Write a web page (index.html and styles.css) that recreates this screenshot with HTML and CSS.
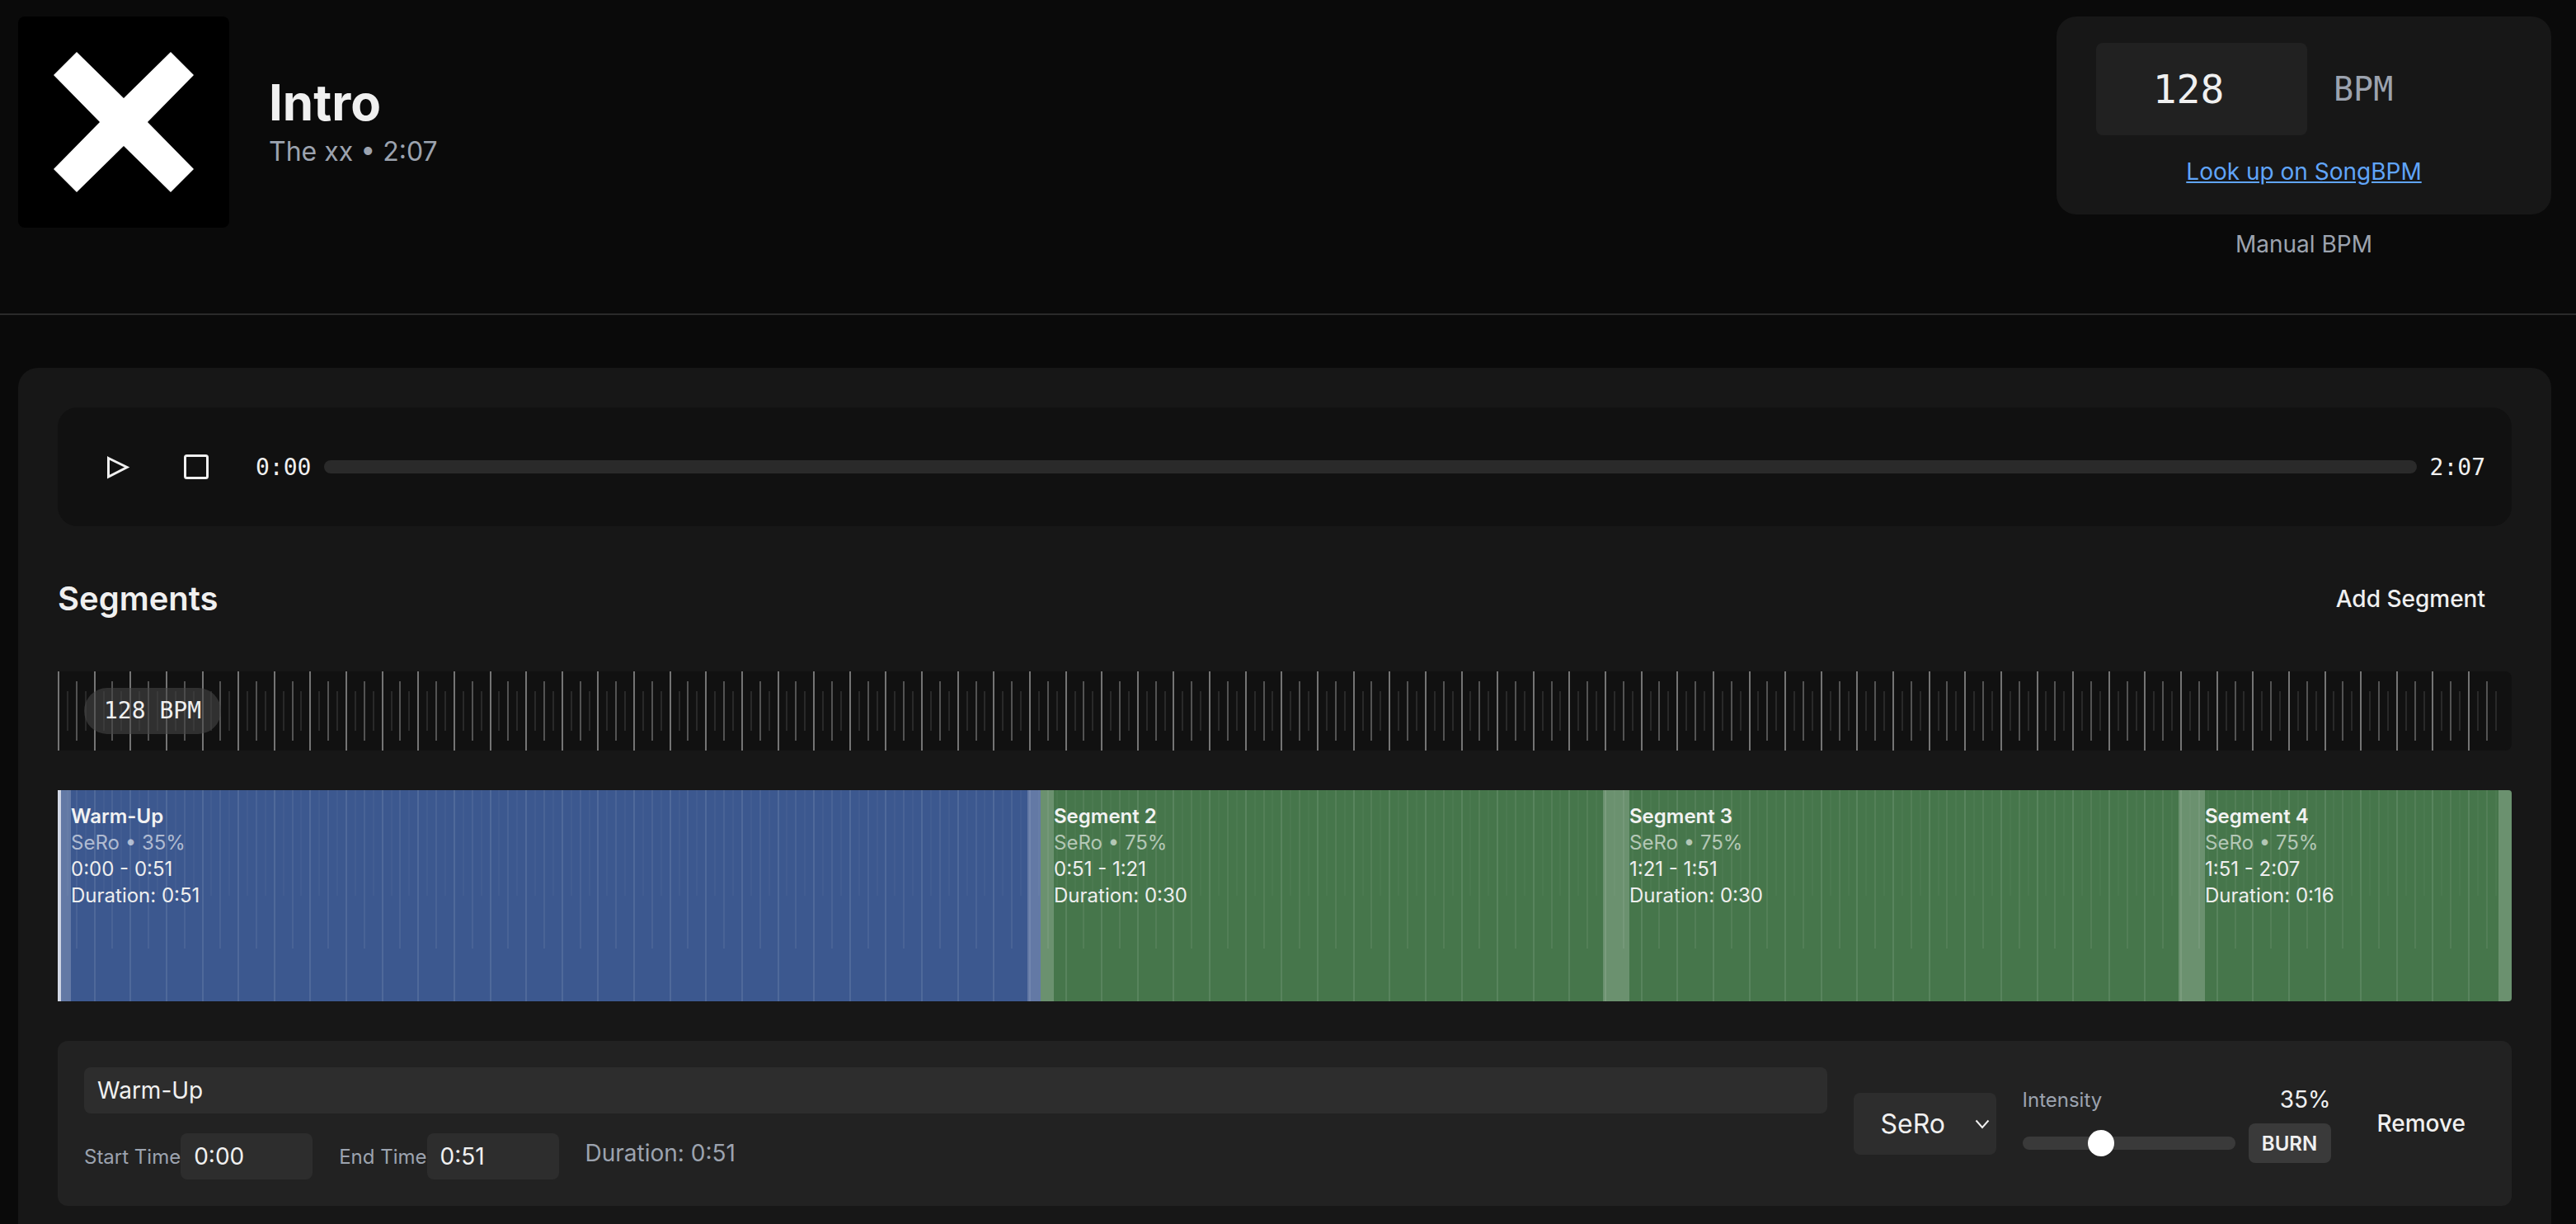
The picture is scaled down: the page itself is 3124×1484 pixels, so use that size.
FILE: index.html
```html
<!DOCTYPE html>
<html lang="en">
<head>
    <meta charset="UTF-8">
    <meta name="viewport" content="width=device-width, initial-scale=1.0">
    <title>Intro - The xx</title>
    <link rel="stylesheet" href="styles.css">
</head>
<body>
    <header class="track-header">
        <svg class="cover" viewBox="0 0 256 256">
            <polygon points="71,43 128,99 185,43 213,71 157,128 213,185 185,213 128,157 71,213 43,185 99,128 43,71" fill="#fff" />
        </svg>
        <div class="track-info">
            <h1>Intro</h1>
            <p>The xx • 2:07</p>
        </div>
        <div class="bpm-box">
            <div class="bpm-card">
                <div class="bpm-row">
                    <input class="bpm-input" type="text" value="128">
                    <span class="bpm-unit">BPM</span>
                </div>
                <a class="bpm-link" href="#">Look up on SongBPM</a>
            </div>
            <p class="bpm-note">Manual BPM</p>
        </div>
    </header>

    <main class="panel">
        <div class="player">
            <button class="icon-btn" aria-label="Play">
                <svg viewBox="0 0 40 40"><polygon points="9.5,9.5 32,20.5 9.5,32" /></svg>
            </button>
            <button class="icon-btn" aria-label="Stop">
                <svg viewBox="0 0 40 40"><rect x="6.5" y="6.5" width="27" height="27" rx="2" /></svg>
            </button>
            <span class="time time-start">0:00</span>
            <div class="progress"></div>
            <span class="time">2:07</span>
        </div>

        <div class="section-head">
            <h2>Segments</h2>
            <button class="text-btn add-btn">Add Segment</button>
        </div>

        <div class="ruler" id="ruler">
            <span class="bpm-badge">128 BPM</span>
        </div>

        <div class="strip">
            <div class="strip-ticks" id="strip-ticks"></div>
            <div class="segment seg-blue seg-selected" style="width: 1192px">
                <strong>Warm-Up</strong>
                <span class="seg-meta">SeRo • 35%</span>
                <span>0:00 - 0:51</span>
                <span>Duration: 0:51</span>
            </div>
            <div class="segment seg-green" style="width: 698px">
                <strong>Segment 2</strong>
                <span class="seg-meta">SeRo • 75%</span>
                <span>0:51 - 1:21</span>
                <span>Duration: 0:30</span>
            </div>
            <div class="segment seg-green" style="width: 698px">
                <strong>Segment 3</strong>
                <span class="seg-meta">SeRo • 75%</span>
                <span>1:21 - 1:51</span>
                <span>Duration: 0:30</span>
            </div>
            <div class="segment seg-green" style="width: 388px">
                <strong>Segment 4</strong>
                <span class="seg-meta">SeRo • 75%</span>
                <span>1:51 - 2:07</span>
                <span>Duration: 0:16</span>
            </div>
        </div>

        <div class="editor">
            <div class="editor-main">
                <input class="field name-field" type="text" value="Warm-Up">
                <div class="time-row">
                    <label class="time-field">Start Time<input class="field" type="text" value="0:00"></label>
                    <label class="time-field">End Time<input class="field" type="text" value="0:51"></label>
                    <span class="duration">Duration: 0:51</span>
                </div>
            </div>
            <div class="select-wrap">
                <select class="type-select">
                    <option>SeRo</option>
                </select>
                <svg class="chevron" viewBox="0 0 18 12"><polyline points="1.5,1.5 9,10 16.5,1.5" /></svg>
            </div>
            <div class="intensity">
                <div class="intensity-head">
                    <span class="intensity-label">Intensity</span>
                    <span class="intensity-value">35%</span>
                </div>
                <div class="intensity-row">
                    <input class="slider" type="range" min="0" max="100" value="35">
                    <button class="burn-btn">BURN</button>
                </div>
            </div>
            <button class="text-btn remove-btn">Remove</button>
        </div>
    </main>

    <script src="script.js"></script>
</body>
</html>
```

FILE: styles.css
```css
* {
    box-sizing: border-box;
}
html, body {
    height: 100%;
    overflow: hidden;
}
body {
    margin: 0;
    background-color: #0a0a0a;
    color: #f0f0f0;
    font-family: Inter, 'Liberation Sans', sans-serif;
}
button, input, select {
    font-family: inherit;
    color: inherit;
    border: none;
    outline: none;
}
button {
    background: none;
    padding: 0;
}

/* header */
.track-header {
    display: flex;
    align-items: flex-start;
    height: 382px;
    padding: 20px 30px 0 22px;
    border-bottom: 2px solid #2a2a2a;
}
.cover {
    width: 256px;
    height: 256px;
    flex-shrink: 0;
    background-color: #000;
    border-radius: 8px;
}
.track-info {
    flex: 1;
    align-self: flex-start;
    margin-top: 68px;
    margin-left: 48px;
}
.track-info h1 {
    margin: 0;
    font-size: 60px;
    line-height: 72px;
    font-weight: 700;
}
.track-info p {
    margin: 0;
    font-size: 32px;
    line-height: 48px;
    color: #9ca3af;
}
.bpm-box {
    width: 600px;
    text-align: center;
}
.bpm-card {
    height: 240px;
    padding: 32px 48px;
    background-color: #171717;
    border-radius: 24px;
}
.bpm-row {
    display: flex;
    align-items: center;
    gap: 32px;
}
.bpm-input {
    width: 256px;
    height: 112px;
    padding: 0 32px 0 0;
    background-color: #212121;
    border-radius: 8px;
    text-align: center;
    font-family: 'DejaVu Sans Mono', monospace;
    font-size: 48px;
}
.bpm-unit {
    font-family: 'DejaVu Sans Mono', monospace;
    font-size: 40px;
    color: #9ca3af;
}
.bpm-link {
    display: block;
    margin-top: 24px;
    font-size: 28px;
    line-height: 40px;
    color: #60a5fa;
}
.bpm-note {
    margin: 16px 0 0;
    font-size: 28px;
    line-height: 40px;
    color: #9ca3af;
}

/* main panel */
.panel {
    margin: 64px 30px 0 22px;
    padding: 48px;
    height: 1100px;
    background-color: #171717;
    border-radius: 24px 24px 0 0;
}
.player {
    display: flex;
    align-items: center;
    gap: 16px;
    height: 144px;
    padding: 0 32px;
    background-color: #111;
    border-radius: 24px;
}
.icon-btn {
    width: 80px;
    height: 80px;
    padding: 20px;
}
.icon-btn svg {
    display: block;
    width: 40px;
    height: 40px;
    fill: none;
    stroke: #f0f0f0;
    stroke-width: 3;
}
.time {
    font-family: 'DejaVu Sans Mono', monospace;
    font-size: 28px;
}
.time-start {
    margin-left: 16px;
}
.progress {
    flex: 1;
    height: 16px;
    background-color: #2a2a2a;
    border-radius: 8px;
}
.section-head {
    display: flex;
    align-items: center;
    justify-content: space-between;
    height: 80px;
    margin-top: 48px;
}
.section-head h2 {
    margin: -2px 0 0;
    font-size: 40px;
    font-weight: 600;
}
.text-btn {
    font-size: 28px;
    font-weight: 500;
    padding: 16px 32px;
}
.add-btn {
    padding-right: 32px;
}

/* beat ruler */
.ruler {
    position: relative;
    height: 96px;
    margin-top: 48px;
    background-color: #111;
    border-radius: 0 8px 8px 0;
}
.tick {
    position: absolute;
    width: 2px;
}
.ruler .tick-bar {
    top: 0;
    height: 96px;
    background-color: rgba(255, 255, 255, 0.42);
}
.ruler .tick-half {
    top: 12px;
    height: 72px;
    background-color: rgba(255, 255, 255, 0.28);
}
.ruler .tick-beat {
    top: 24px;
    height: 48px;
    background-color: rgba(255, 255, 255, 0.1);
}
.bpm-badge {
    position: absolute;
    left: 32px;
    top: 20px;
    height: 56px;
    padding: 0 24px;
    line-height: 56px;
    border-radius: 28px;
    background-color: rgba(70, 70, 70, 0.6);
    font-family: 'DejaVu Sans Mono', monospace;
    font-size: 28px;
    white-space: pre;
}

/* segment strip */
.strip {
    position: relative;
    display: flex;
    height: 256px;
    margin-top: 48px;
    overflow: hidden;
    border-radius: 0 4px 4px 0;
}
.strip-ticks {
    position: absolute;
    inset: 0;
    z-index: 1;
}
.strip-ticks .tick-bar {
    top: 0;
    height: 100%;
    background-color: rgba(255, 255, 255, 0.1);
}
.strip-ticks .tick-half {
    top: 0;
    height: 75%;
    background-color: rgba(255, 255, 255, 0.07);
}
.strip-ticks .tick-beat {
    top: 0;
    height: 50%;
    background-color: rgba(255, 255, 255, 0.03);
}
.segment {
    position: relative;
    display: flex;
    flex-direction: column;
    padding: 16px;
    font-size: 24px;
    line-height: 32px;
    color: #eee;
}
.segment::before, .segment::after {
    content: "";
    position: absolute;
    top: 0;
    bottom: 0;
    width: 16px;
    background-color: rgba(255, 255, 255, 0.2);
}
.segment::before {
    left: 0;
}
.segment::after {
    right: 0;
}
.segment strong {
    position: relative;
    z-index: 2;
    font-weight: 600;
    color: #f2f2f2;
}
.segment span {
    position: relative;
    z-index: 2;
}
.segment .seg-meta {
    color: rgba(255, 255, 255, 0.6);
}
.seg-blue {
    background-color: #3c588f;
}
.seg-green {
    background-color: #46764b;
}
.seg-selected {
    box-shadow: inset 4px 0 0 #c2cadd;
}

/* editor card */
.editor {
    display: flex;
    align-items: center;
    gap: 32px;
    height: 200px;
    margin-top: 48px;
    padding: 0 32px;
    background-color: #222;
    border-radius: 12px;
}
.editor-main {
    flex: 1;
}
.field {
    height: 56px;
    padding: 0 16px;
    background-color: #2d2d2d;
    border-radius: 8px;
    font-size: 28px;
}
.name-field {
    display: block;
    width: 100%;
}
.time-row {
    display: flex;
    gap: 32px;
    margin-top: 24px;
}
.time-field {
    display: flex;
    align-items: center;
    font-size: 24px;
    color: #9ca3af;
}
.time-field .field {
    width: 160px;
    color: #f0f0f0;
}
.duration {
    align-self: flex-start;
    margin-top: 4px;
    font-size: 28px;
    line-height: 40px;
    color: #9ca3af;
}
.select-wrap {
    position: relative;
    width: 173px;
    height: 75px;
}
.type-select {
    appearance: none;
    width: 100%;
    height: 100%;
    padding-left: 33px;
    background-color: #2d2d2d;
    border-radius: 8px;
    font-size: 32px;
}
.chevron {
    position: absolute;
    right: 8px;
    top: 32px;
    width: 18px;
    height: 12px;
    fill: none;
    stroke: #f0f0f0;
    stroke-width: 2;
}
.intensity {
    width: 374px;
}
.intensity-head {
    display: flex;
    align-items: center;
    justify-content: space-between;
    height: 38px;
    margin-bottom: 10px;
}
.intensity-label {
    font-size: 24px;
    color: #9ca3af;
}
.intensity-value {
    font-size: 28px;
}
.intensity-row {
    display: flex;
    align-items: center;
    gap: 16px;
}
.slider {
    appearance: none;
    flex: 1;
    min-width: 0;
    height: 16px;
    margin: 0;
    background-color: #3a3a3a;
    border-radius: 8px;
}
.slider::-webkit-slider-thumb {
    appearance: none;
    width: 32px;
    height: 32px;
    background-color: #fff;
    border-radius: 50%;
}
.burn-btn {
    width: 100px;
    height: 48px;
    background-color: #3a3a3a;
    border-radius: 8px;
    font-size: 24px;
    font-weight: 600;
}
.remove-btn {
    padding: 16px 24px;
}
```

FILE: script.js
```js
// beat ticks for the ruler and the segment strip
const BEAT_COUNT = 272;
const BEATS_WIDE = 272.85;

function addTicks(parent) {
    for (let beat = 0; beat < BEAT_COUNT; beat++) {
        const tick = document.createElement('span');
        let kind = 'tick-beat';
        if (beat % 4 === 0) kind = 'tick-bar';
        else if (beat % 2 === 0) kind = 'tick-half';
        tick.className = 'tick ' + kind;
        tick.style.left = (beat / BEATS_WIDE * 100) + '%';
        parent.insertBefore(tick, parent.firstChild);
    }
}

addTicks(document.getElementById('ruler'));
addTicks(document.getElementById('strip-ticks'));
```
